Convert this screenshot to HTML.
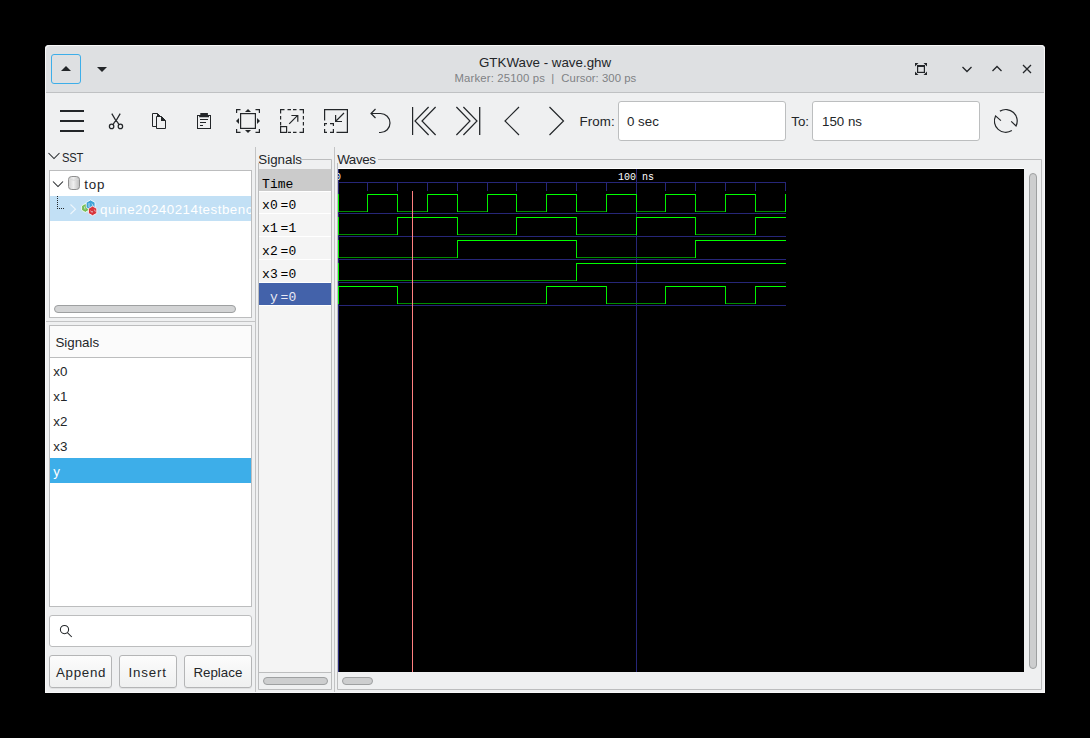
<!DOCTYPE html>
<html><head><meta charset="utf-8"><title>GTKWave</title>
<style>
*{margin:0;padding:0;box-sizing:border-box}
html,body{width:1090px;height:738px;overflow:hidden;background:#000}
body{position:relative;font-family:'Liberation Sans', sans-serif}
.b{position:absolute}
.t{position:absolute;white-space:pre}
svg{position:absolute;left:0;top:0}
#clipw{position:absolute;left:338px;top:169px;width:686px;height:503px;overflow:hidden}
</style></head><body>
<div class="b" style="left:45px;top:45px;width:1000px;height:648px;background:#eff0f1;border-radius:4px 4px 0 0;"></div><div class="b" style="left:45px;top:45px;width:1000px;height:47px;background:#dee0e2;border-radius:4px 4px 0 0;"></div><div class="b" style="left:45px;top:92px;width:1000px;height:1px;background:#bfc1c3;"></div><div class="b" style="left:51px;top:54px;width:30px;height:30px;border:1px solid #3daee9;border-radius:3px;"></div><div class="b" style="left:618px;top:101px;width:168px;height:40px;background:#ffffff;border:1px solid #bcbebf;border-radius:3px;"></div><div class="b" style="left:812px;top:101px;width:168px;height:40px;background:#ffffff;border:1px solid #bcbebf;border-radius:3px;"></div><div class="b" style="left:255px;top:147px;width:1px;height:546px;background:#c3c4c5;"></div><div class="b" style="left:334px;top:147px;width:1px;height:546px;background:#c3c4c5;"></div><div class="b" style="left:45px;top:321px;width:211px;height:1px;background:#c3c4c5;"></div><div class="b" style="left:49px;top:170px;width:203px;height:148px;background:#ffffff;border:1px solid #bcbdbe;"></div><div class="b" style="left:50px;top:196px;width:201px;height:25px;background:#c2e0f5;"></div><div class="b" style="left:54px;top:305px;width:182px;height:8px;background:#d3d4d5;border:1px solid #9ea0a1;border-radius:5px;"></div><div class="b" style="left:49px;top:325px;width:203px;height:282px;background:#ffffff;border:1px solid #bcbdbe;"></div><div class="b" style="left:50px;top:326px;width:201px;height:31px;background:#fbfbfb;"></div><div class="b" style="left:50px;top:357px;width:201px;height:1px;background:#bcbdbe;"></div><div class="b" style="left:50px;top:458px;width:201px;height:25px;background:#3daee9;"></div><div class="b" style="left:49px;top:615px;width:203px;height:32px;background:#ffffff;border:1px solid #bcbdbe;border-radius:3px;"></div><div class="b" style="left:49px;top:655px;width:63px;height:33px;background:linear-gradient(#fcfcfc,#eff0f0);border:1px solid #b4b5b6;border-radius:3px;box-shadow:0 1px 0 rgba(0,0,0,.06);"></div><div class="b" style="left:119px;top:655px;width:58px;height:33px;background:linear-gradient(#fcfcfc,#eff0f0);border:1px solid #b4b5b6;border-radius:3px;box-shadow:0 1px 0 rgba(0,0,0,.06);"></div><div class="b" style="left:184px;top:655px;width:68px;height:33px;background:linear-gradient(#fcfcfc,#eff0f0);border:1px solid #b4b5b6;border-radius:3px;box-shadow:0 1px 0 rgba(0,0,0,.06);"></div><div class="b" style="left:259px;top:169px;width:72px;height:503px;background:#f4f4f4;"></div><div class="b" style="left:259px;top:169px;width:72px;height:22px;background:#cbcbcb;"></div><div class="b" style="left:259px;top:191px;width:72px;height:1px;background:#ffffff;"></div><div class="b" style="left:259px;top:213px;width:72px;height:1px;background:#ffffff;"></div><div class="b" style="left:259px;top:236px;width:72px;height:1px;background:#ffffff;"></div><div class="b" style="left:259px;top:259px;width:72px;height:1px;background:#ffffff;"></div><div class="b" style="left:259px;top:282px;width:72px;height:1px;background:#ffffff;"></div><div class="b" style="left:259px;top:305px;width:72px;height:1px;background:#ffffff;"></div><div class="b" style="left:259px;top:283px;width:72px;height:22px;background:#4362aa;"></div><div class="b" style="left:259px;top:672px;width:72px;height:1px;background:#bcbdbe;"></div><div class="b" style="left:263px;top:677px;width:65px;height:8px;background:#cdcecf;border:1px solid #9ea0a1;border-radius:5px;"></div><div class="b" style="left:338px;top:168px;width:686px;height:1px;background:#ffffff;"></div><div class="b" style="left:338px;top:169px;width:686px;height:503px;background:#000000;"></div><div class="b" style="left:1029px;top:173px;width:8px;height:496px;background:#cdcecf;border:1px solid #9ea0a1;border-radius:5px;"></div><div class="b" style="left:342px;top:677px;width:31px;height:8px;background:#cdcecf;border:1px solid #9ea0a1;border-radius:5px;"></div>
<svg width="1090" height="738" viewBox="0 0 1090 738" shape-rendering="geometricPrecision"><path d="M45.5,692 V49.5 Q45.5,45.5 49.5,45.5 H1040 Q1044.5,45.5 1044.5,49.5 V692.5 H45.5" fill="none" stroke="#f8f8f9" stroke-width="1"/><path d="M61,71 H71 L66,66 Z" fill="#232629"/><path d="M97,67 H107 L102,72 Z" fill="#232629"/><g fill="#232629"><path d="M915,63 H918.5 L915,66.5Z"/><path d="M927,63 H923.5 L927,66.5Z"/><path d="M915,75 H918.5 L915,71.5Z"/><path d="M927,75 H923.5 L927,71.5Z"/></g><rect x="917.6" y="65.6" width="6.8" height="6.8" fill="none" stroke="#232629" stroke-width="1.2"/><rect x="917" y="65" width="8" height="2" fill="#232629"/><g fill="none" stroke="#232629" stroke-width="1.3"><path d="M962.5,67 L967,71.5 L971.5,67"/><path d="M992.5,71 L997,66.5 L1001.5,71"/><path d="M1023,65 L1031,73 M1031,65 L1023,73"/></g><g fill="#232629"><rect x="60" y="110" width="24" height="2"/><rect x="60" y="120" width="24" height="2"/><rect x="60" y="130" width="24" height="2"/></g><g fill="none" stroke="#232629" stroke-width="1.25"><path d="M111.8,113.6 L116,120.8 L120.2,113.6"/><path d="M113.2,124.6 C114.4,121.6 115.2,121 116,121 C116.8,121 117.6,121.6 118.8,124.6"/><circle cx="111.6" cy="126.4" r="2.2"/><circle cx="120.4" cy="126.4" r="2.2"/></g><g fill="none" stroke="#232629" stroke-width="1"><path d="M156,126.5 H152.5 V113.5 H157.5 L160,116"/><path d="M156.5,128.5 V116.5 H161.5 L165.5,120.5 V128.5 Z"/></g><g fill="#232629"><path d="M157,113 L160.5,116.5 H157Z"/><path d="M161,116 L166,121 H161Z"/></g><g fill="none" stroke="#232629" stroke-width="1"><rect x="197.5" y="115.5" width="13" height="13"/></g><g fill="#232629"><path d="M200.3,113 H207.9 V115 H209 V117.3 H199.2 V115 H200.3Z"/><rect x="200" y="119" width="8" height="1"/><rect x="200" y="122" width="6" height="1"/><rect x="200" y="125" width="3" height="1"/></g><g fill="none" stroke="#232629" stroke-width="1.2"><rect x="240.6" y="113.6" width="14.8" height="14.8"/><path d="M236.6,113 V109.6 H240.5 M255.5,109.6 H259.4 V113 M236.6,129 V132.4 H240.5 M255.5,132.4 H259.4 V129"/></g><g fill="#232629"><path d="M245,112 H251 L248,109Z"/><path d="M245,130 H251 L248,133Z"/><path d="M239,118 V124 L236,121Z"/><path d="M257,118 V124 L260,121Z"/></g><g fill="none" stroke="#232629" stroke-width="1.2"><path d="M280.6,113.5 V109.6 H284.5 M287.5,109.6 H291 M293,109.6 H296.5 M299.5,109.6 H303.4 V113.5 M303.4,116 V119.5 M303.4,122 V125.5 M303.4,128 V132.4 H299.5 M296.5,132.4 H293 M291,132.4 H288 M280.6,116 V119.5 M280.6,122 V125.5"/><rect x="280.6" y="126.6" width="6" height="5.8"/><path d="M289.2,123.9 L297.4,115.7 M291.4,115.5 H297.8 V121.7"/></g><g fill="none" stroke="#232629" stroke-width="1.2"><path d="M324.6,120.5 V109.6 H347.4 V132.4 H336.5"/><path d="M324.6,126 V123.6 H327 M330,123.6 H333.4 V126 M333.4,129 V132.4 H330 M327,132.4 H324.6 V129"/><path d="M344,113 L335.5,121.5 M335.6,115 V121.5 H342"/></g><g fill="none" stroke="#232629" stroke-width="1.2"><path d="M371,113.5 H380.5 A9.5,9.5 0 0 1 380.5,132.5 H379"/><path d="M375.5,109 L371,113.5 L375.5,118"/></g><g fill="none" stroke="#232629" stroke-width="1.2"><path d="M412.6,107 V135"/><path d="M428.6,107 L415,121 L428.6,135 M435.6,107 L422,121 L435.6,135"/><path d="M456.4,107 L470,121 L456.4,135 M463.4,107 L477,121 L463.4,135"/><path d="M479.7,107 V135" stroke-width="1.3"/></g><g fill="none" stroke="#232629" stroke-width="1.2"><path d="M519,107 L505,121 L519,135"/><path d="M549.5,107 L563.5,121 L549.5,135"/></g><g fill="none" stroke="#232629" stroke-width="1.2"><path d="M999.93,111.13 A11.4,11.4 0 0 1 1016.05,125.90 L1011.2,121.4"/><path d="M1011.84,130.57 A11.4,11.4 0 0 1 995.55,115.90 L1000.9,120.6"/></g><path d="M48.5,153 L54,158.5 L59.5,153" fill="none" stroke="#232629" stroke-width="1.05"/><path d="M53,181.5 L58,186.5 L63,181.5" fill="none" stroke="#232629" stroke-width="1.05"/><defs><linearGradient id="cyl" x1="0" x2="1"><stop offset="0" stop-color="#d8d8d8"/><stop offset=".5" stop-color="#f4f4f4"/><stop offset="1" stop-color="#c4c4c4"/></linearGradient></defs><defs><linearGradient id="cyl2" x1="0" x2="1"><stop offset="0" stop-color="#cfcfcf"/><stop offset=".45" stop-color="#efefef"/><stop offset="1" stop-color="#bdbdbd"/></linearGradient></defs><rect x="68.5" y="176.5" width="11" height="13" rx="3.2" ry="3" fill="url(#cyl2)" stroke="#8f8f8f"/><path d="M69.5,179.2 Q74,181.3 78.5,179.2" fill="none" stroke="#d9d9d9"/><g fill="#232629"><rect x="57" y="196" width="1" height="1"/><rect x="57" y="198" width="1" height="1"/><rect x="57" y="200" width="1" height="1"/><rect x="57" y="202" width="1" height="1"/><rect x="57" y="204" width="1" height="1"/><rect x="57" y="206" width="1" height="1"/><rect x="57" y="208" width="1" height="1"/><rect x="59" y="208" width="1" height="1"/><rect x="61" y="208" width="1" height="1"/><rect x="63" y="208" width="1" height="1"/></g><path d="M70.5,204.5 L75.5,209.2 L70.5,214" fill="none" stroke="#eef6fc" stroke-width="1.1"/><g stroke="#fff" stroke-width="0.8"><path d="M89.02,210.15 L85.30,212.30 L81.58,210.15 L81.58,205.85 L85.30,203.70 L89.02,205.85Z" fill="#76bd55"/><path d="M95.02,207.55 L90.60,210.10 L86.18,207.55 L86.18,202.45 L90.60,199.90 L95.02,202.45Z" fill="#3fa2d6"/><path d="M96.76,213.30 L92.60,215.70 L88.44,213.30 L88.44,208.50 L92.60,206.10 L96.76,208.50Z" fill="#d7343b"/></g><g stroke="#e8f4fb" stroke-width="0.7" fill="none"><path d="M89,203 V207 M91.8,203.6 L93.3,206.2"/><path d="M90.6,210.6 Q91.6,213.2 93,211.6 M94.4,209.6 L95.4,211.6"/><path d="M84.3,206.5 L85.1,209.5"/></g><g fill="none" stroke="#232629" stroke-width="1.05"><circle cx="64.5" cy="629.6" r="4.1"/><path d="M67.4,632.6 L71.8,637"/></g><path d="M300,159.5 H331.5 V689.5 H258.5 V163" fill="none" stroke="#bcbdbe" stroke-width="1"/><path d="M378,159.5 H1041.5 V689.5 H337.5 V163" fill="none" stroke="#bcbdbe" stroke-width="1"/></svg>
<svg width="1090" height="738" viewBox="0 0 1090 738" shape-rendering="crispEdges"><g fill="#262678"><rect x="338" y="182" width="448" height="1"/><rect x="367" y="182" width="1" height="9"/><rect x="397" y="182" width="1" height="9"/><rect x="427" y="182" width="1" height="9"/><rect x="457" y="182" width="1" height="9"/><rect x="487" y="182" width="1" height="9"/><rect x="516" y="182" width="1" height="9"/><rect x="546" y="182" width="1" height="9"/><rect x="576" y="182" width="1" height="9"/><rect x="606" y="182" width="1" height="9"/><rect x="665" y="182" width="1" height="9"/><rect x="695" y="182" width="1" height="9"/><rect x="725" y="182" width="1" height="9"/><rect x="755" y="182" width="1" height="9"/><rect x="785" y="182" width="1" height="9"/><rect x="338" y="169" width="1" height="503"/><rect x="636" y="169" width="1" height="503"/><rect x="338" y="213" width="448" height="1"/><rect x="338" y="236" width="448" height="1"/><rect x="338" y="259" width="448" height="1"/><rect x="338" y="282" width="448" height="1"/><rect x="338" y="305" width="448" height="1"/></g><rect x="338" y="211" width="30" height="1" fill="#008c00"/><rect x="367" y="194" width="31" height="1" fill="#00ff00"/><rect x="397" y="211" width="31" height="1" fill="#008c00"/><rect x="427" y="194" width="31" height="1" fill="#00ff00"/><rect x="457" y="211" width="31" height="1" fill="#008c00"/><rect x="487" y="194" width="30" height="1" fill="#00ff00"/><rect x="516" y="211" width="31" height="1" fill="#008c00"/><rect x="546" y="194" width="31" height="1" fill="#00ff00"/><rect x="576" y="211" width="31" height="1" fill="#008c00"/><rect x="606" y="194" width="31" height="1" fill="#00ff00"/><rect x="636" y="211" width="30" height="1" fill="#008c00"/><rect x="665" y="194" width="31" height="1" fill="#00ff00"/><rect x="695" y="211" width="31" height="1" fill="#008c00"/><rect x="725" y="194" width="31" height="1" fill="#00ff00"/><rect x="755" y="211" width="31" height="1" fill="#008c00"/><rect x="338" y="194" width="1" height="18" fill="#00f000"/><rect x="367" y="194" width="1" height="18" fill="#00f000"/><rect x="397" y="194" width="1" height="18" fill="#00f000"/><rect x="427" y="194" width="1" height="18" fill="#00f000"/><rect x="457" y="194" width="1" height="18" fill="#00f000"/><rect x="487" y="194" width="1" height="18" fill="#00f000"/><rect x="516" y="194" width="1" height="18" fill="#00f000"/><rect x="546" y="194" width="1" height="18" fill="#00f000"/><rect x="576" y="194" width="1" height="18" fill="#00f000"/><rect x="606" y="194" width="1" height="18" fill="#00f000"/><rect x="636" y="194" width="1" height="18" fill="#00f000"/><rect x="665" y="194" width="1" height="18" fill="#00f000"/><rect x="695" y="194" width="1" height="18" fill="#00f000"/><rect x="725" y="194" width="1" height="18" fill="#00f000"/><rect x="755" y="194" width="1" height="18" fill="#00f000"/><rect x="785" y="194" width="1" height="18" fill="#00f000"/><rect x="338" y="234" width="60" height="1" fill="#008c00"/><rect x="397" y="217" width="61" height="1" fill="#00ff00"/><rect x="457" y="234" width="60" height="1" fill="#008c00"/><rect x="516" y="217" width="61" height="1" fill="#00ff00"/><rect x="576" y="234" width="61" height="1" fill="#008c00"/><rect x="636" y="217" width="60" height="1" fill="#00ff00"/><rect x="695" y="234" width="61" height="1" fill="#008c00"/><rect x="755" y="217" width="31" height="1" fill="#00ff00"/><rect x="338" y="217" width="1" height="18" fill="#00f000"/><rect x="397" y="217" width="1" height="18" fill="#00f000"/><rect x="457" y="217" width="1" height="18" fill="#00f000"/><rect x="516" y="217" width="1" height="18" fill="#00f000"/><rect x="576" y="217" width="1" height="18" fill="#00f000"/><rect x="636" y="217" width="1" height="18" fill="#00f000"/><rect x="695" y="217" width="1" height="18" fill="#00f000"/><rect x="755" y="217" width="1" height="18" fill="#00f000"/><rect x="338" y="257" width="120" height="1" fill="#008c00"/><rect x="457" y="240" width="120" height="1" fill="#00ff00"/><rect x="576" y="257" width="120" height="1" fill="#008c00"/><rect x="695" y="240" width="91" height="1" fill="#00ff00"/><rect x="338" y="240" width="1" height="18" fill="#00f000"/><rect x="457" y="240" width="1" height="18" fill="#00f000"/><rect x="576" y="240" width="1" height="18" fill="#00f000"/><rect x="695" y="240" width="1" height="18" fill="#00f000"/><rect x="338" y="280" width="239" height="1" fill="#008c00"/><rect x="576" y="263" width="210" height="1" fill="#00ff00"/><rect x="338" y="263" width="1" height="18" fill="#00f000"/><rect x="576" y="263" width="1" height="18" fill="#00f000"/><rect x="338" y="286" width="60" height="1" fill="#00ff00"/><rect x="397" y="303" width="150" height="1" fill="#008c00"/><rect x="546" y="286" width="61" height="1" fill="#00ff00"/><rect x="606" y="303" width="60" height="1" fill="#008c00"/><rect x="665" y="286" width="61" height="1" fill="#00ff00"/><rect x="725" y="303" width="31" height="1" fill="#008c00"/><rect x="755" y="286" width="31" height="1" fill="#00ff00"/><rect x="338" y="286" width="1" height="18" fill="#00f000"/><rect x="397" y="286" width="1" height="18" fill="#00f000"/><rect x="546" y="286" width="1" height="18" fill="#00f000"/><rect x="606" y="286" width="1" height="18" fill="#00f000"/><rect x="665" y="286" width="1" height="18" fill="#00f000"/><rect x="725" y="286" width="1" height="18" fill="#00f000"/><rect x="755" y="286" width="1" height="18" fill="#00f000"/><rect x="412" y="191" width="1" height="481" fill="#ff8080"/></svg>
<div id="clipw"><div style="position:absolute;left:-338px;top:-169px;width:1090px;height:738px"><div class="t" style="left:335.00px;top:170.84px;font-size:10px;line-height:13px;color:#ffffff;font-family:'Liberation Mono', monospace;">0</div><div class="t" style="left:618.00px;top:170.84px;font-size:10px;line-height:13px;color:#ffffff;font-family:'Liberation Mono', monospace;">100 ns</div></div></div>
<div class="t" style="left:479.00px;top:53.58px;font-size:13.33px;line-height:17px;color:#232629;font-family:'Liberation Sans', sans-serif;">GTKWave - wave.ghw</div><div class="t" style="left:454.50px;top:70.57px;font-size:11.33px;line-height:15px;color:#7f8285;font-family:'Liberation Sans', sans-serif;letter-spacing:0.15px;">Marker: 25100 ps</div><div class="t" style="left:551.30px;top:70.57px;font-size:11.33px;line-height:15px;color:#7f8285;font-family:'Liberation Sans', sans-serif;">|</div><div class="t" style="left:561.30px;top:70.57px;font-size:11.33px;line-height:15px;color:#7f8285;font-family:'Liberation Sans', sans-serif;letter-spacing:0.05px;">Cursor: 300 ps</div><div class="t" style="left:579.40px;top:113.28px;font-size:13.33px;line-height:17px;color:#232629;font-family:'Liberation Sans', sans-serif;letter-spacing:0.1px;">From:</div><div class="t" style="left:627.00px;top:112.88px;font-size:13.33px;line-height:17px;color:#232629;font-family:'Liberation Sans', sans-serif;">0 sec</div><div class="t" style="left:791.30px;top:113.28px;font-size:13.33px;line-height:17px;color:#232629;font-family:'Liberation Sans', sans-serif;">To:</div><div class="t" style="left:822.00px;top:112.88px;font-size:13.33px;line-height:17px;color:#232629;font-family:'Liberation Sans', sans-serif;">150 ns</div><div class="t" style="left:62.30px;top:148.88px;font-size:13.33px;line-height:17px;color:#232629;font-family:'Liberation Sans', sans-serif;letter-spacing:-0.2px;transform:scaleX(0.84);transform-origin:0 0;">SST</div><div class="t" style="left:84.30px;top:175.88px;font-size:13.33px;line-height:17px;color:#232629;font-family:'Liberation Sans', sans-serif;letter-spacing:0.8px;">top</div><div class="t" style="left:100.00px;top:200.88px;font-size:13.33px;line-height:17px;color:#ffffff;font-family:'Liberation Sans', sans-serif;letter-spacing:0.5px;width:151px;overflow:hidden;white-space:nowrap;">quine20240214testbench</div><div class="t" style="left:55.40px;top:333.68px;font-size:13.33px;line-height:17px;color:#232629;font-family:'Liberation Sans', sans-serif;">Signals</div><div class="t" style="left:53.30px;top:362.98px;font-size:13.33px;line-height:17px;color:#232629;font-family:'Liberation Sans', sans-serif;">x0</div><div class="t" style="left:53.30px;top:387.98px;font-size:13.33px;line-height:17px;color:#232629;font-family:'Liberation Sans', sans-serif;">x1</div><div class="t" style="left:53.30px;top:412.98px;font-size:13.33px;line-height:17px;color:#232629;font-family:'Liberation Sans', sans-serif;">x2</div><div class="t" style="left:53.30px;top:437.98px;font-size:13.33px;line-height:17px;color:#232629;font-family:'Liberation Sans', sans-serif;">x3</div><div class="t" style="left:53.30px;top:462.98px;font-size:13.33px;line-height:17px;color:#ffffff;font-family:'Liberation Sans', sans-serif;">y</div><div class="t" style="left:56.00px;top:664.38px;font-size:13.33px;line-height:17px;color:#232629;font-family:'Liberation Sans', sans-serif;letter-spacing:0.7px;">Append</div><div class="t" style="left:128.60px;top:664.38px;font-size:13.33px;line-height:17px;color:#232629;font-family:'Liberation Sans', sans-serif;letter-spacing:0.8px;">Insert</div><div class="t" style="left:193.40px;top:664.38px;font-size:13.33px;line-height:17px;color:#232629;font-family:'Liberation Sans', sans-serif;">Replace</div><div class="t" style="left:258.30px;top:150.58px;font-size:13.33px;line-height:17px;color:#232629;font-family:'Liberation Sans', sans-serif;">Signals</div><div class="t" style="left:262.10px;top:176.04px;font-size:13px;line-height:17px;color:#000000;font-family:'Liberation Mono', monospace;">Time</div><div class="t" style="left:262.10px;top:197.44px;font-size:13px;line-height:17px;color:#000000;font-family:'Liberation Mono', monospace;">x0</div><div class="t" style="left:280.60px;top:197.44px;font-size:13px;line-height:17px;color:#000000;font-family:'Liberation Mono', monospace;">=0</div><div class="t" style="left:262.10px;top:220.44px;font-size:13px;line-height:17px;color:#000000;font-family:'Liberation Mono', monospace;">x1</div><div class="t" style="left:280.60px;top:220.44px;font-size:13px;line-height:17px;color:#000000;font-family:'Liberation Mono', monospace;">=1</div><div class="t" style="left:262.10px;top:243.44px;font-size:13px;line-height:17px;color:#000000;font-family:'Liberation Mono', monospace;">x2</div><div class="t" style="left:280.60px;top:243.44px;font-size:13px;line-height:17px;color:#000000;font-family:'Liberation Mono', monospace;">=0</div><div class="t" style="left:262.10px;top:266.44px;font-size:13px;line-height:17px;color:#000000;font-family:'Liberation Mono', monospace;">x3</div><div class="t" style="left:280.60px;top:266.44px;font-size:13px;line-height:17px;color:#000000;font-family:'Liberation Mono', monospace;">=0</div><div class="t" style="left:262.10px;top:289.44px;font-size:13px;line-height:17px;color:#eaeaf4;font-family:'Liberation Mono', monospace;">&nbsp;y</div><div class="t" style="left:280.60px;top:289.44px;font-size:13px;line-height:17px;color:#eaeaf4;font-family:'Liberation Mono', monospace;">=0</div><div class="t" style="left:337.20px;top:150.58px;font-size:13.33px;line-height:17px;color:#232629;font-family:'Liberation Sans', sans-serif;letter-spacing:-0.4px;">Waves</div>
</body></html>
